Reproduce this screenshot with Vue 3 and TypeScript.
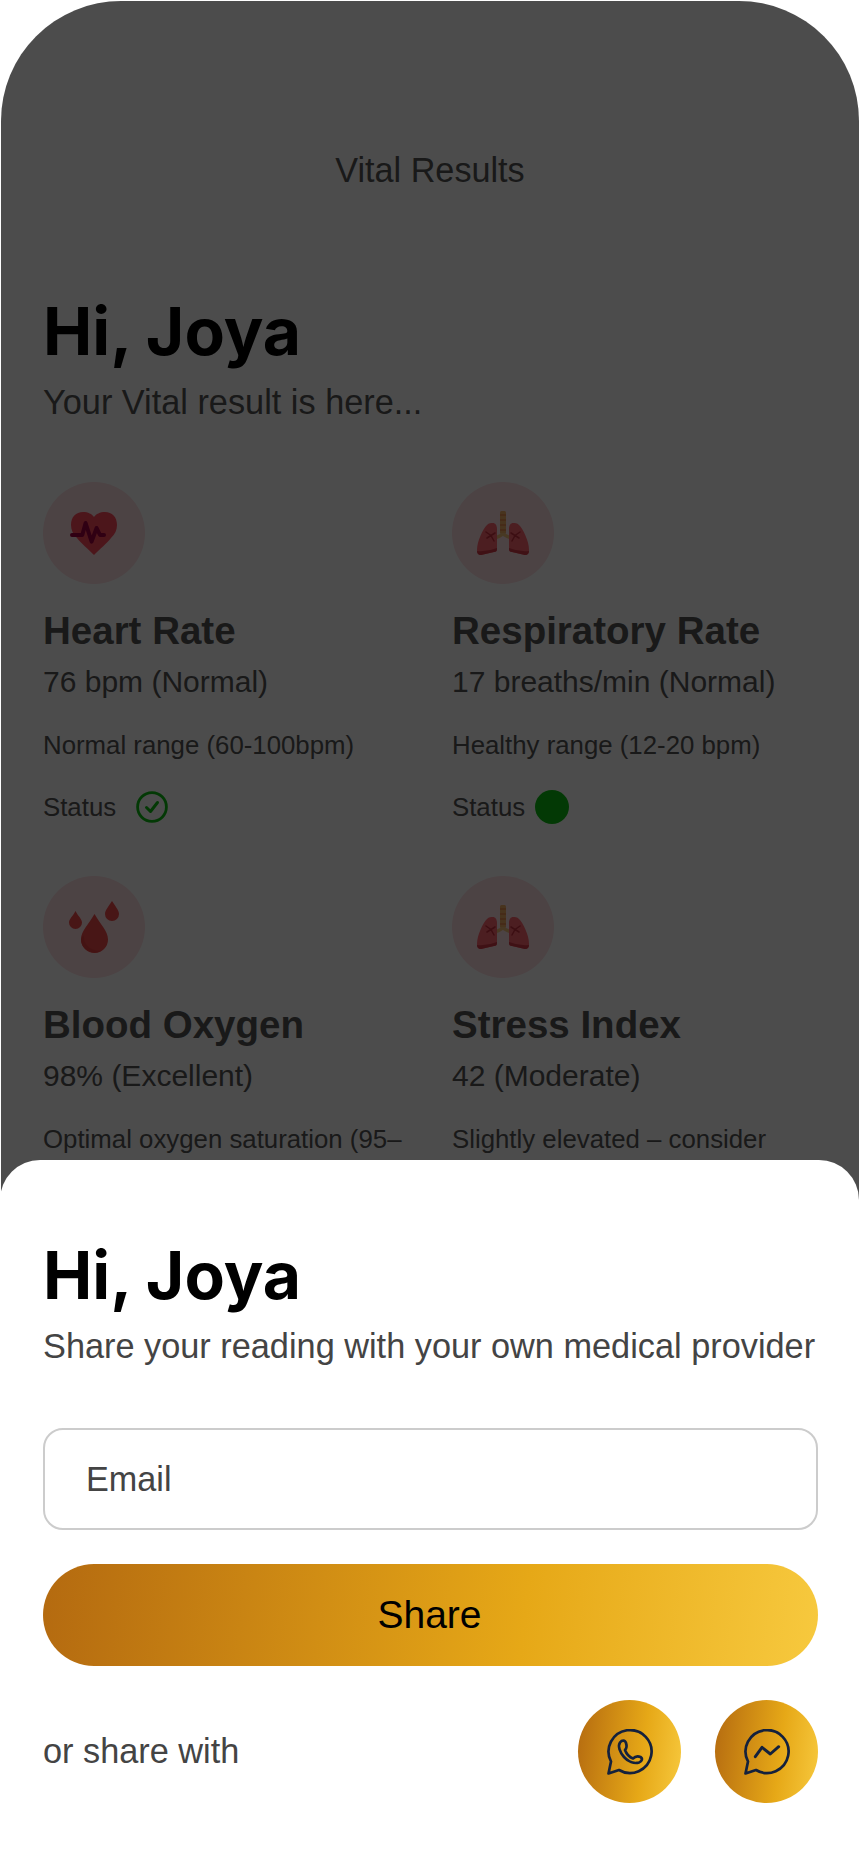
<script setup lang="ts">
interface Vital {
  name: string
  value: string
  note: string
  icon: 'heart' | 'lungs' | 'drops'
  status: 'check' | 'dot' | 'none'
}
const vitals: Vital[] = [
  { name: 'Heart Rate', value: '76 bpm (Normal)', note: 'Normal range (60-100bpm)', icon: 'heart', status: 'check' },
  { name: 'Respiratory Rate', value: '17 breaths/min (Normal)', note: 'Healthy range (12-20 bpm)', icon: 'lungs', status: 'dot' },
  { name: 'Blood Oxygen', value: '98% (Excellent)', note: 'Optimal oxygen saturation (95–100%)', icon: 'drops', status: 'check' },
  { name: 'Stress Index', value: '42 (Moderate)', note: 'Slightly elevated – consider relaxation', icon: 'lungs', status: 'dot' }
]
</script>

<template>
  <div class="page">
    <main class="screen">
      <h2 class="top-title">Vital Results</h2>
      <h1 class="hello">Hi, Joya</h1>
      <p class="lead">Your Vital result is here...</p>
      <section class="grid">
        <article v-for="v in vitals" :key="v.name" class="vital">
          <div class="badge">
            <svg v-if="v.icon === 'heart'" class="heart" viewBox="0 0 48 44">
              <path d="M24 44 C18 38 11 32 7 27 C3 23 1 19 1 14 C1 6 6 1 13 1 C18 1 22 3 24 6 C26 3 30 1 35 1 C42 1 47 6 47 14 C47 19 45 23 41 27 C37 32 30 38 24 44Z" fill="#ff4a5c"/>
              <path d="M2 24 H12.3 L15.6 12 L21.6 30.6 L26.6 17 L30 24 H34" fill="none" stroke="#a00040" stroke-width="4" stroke-linecap="round" stroke-linejoin="round"/>
            </svg>
            <svg v-else-if="v.icon === 'lungs'" class="lungs" viewBox="0 0 52 44">
              <rect x="23" y="0" width="6" height="23" rx="1.5" fill="#f2ad66"/>
              <path d="M23 4h6M23 9h6M23 14h6M23 19h6" stroke="#e8874a" stroke-width="1.6"/>
              <path d="M18 27 Q26 24 26 22 Q26 24 34 27" fill="none" stroke="#f2c078" stroke-width="3.4"/>
              <path d="M16 12 C18 12 20 14 20 18 V38 C20 40 19 41 17 41 L4 44 C1 44 0 42 0 39 C0 30 6 18 10 14 C12 12 14 12 16 12Z" fill="#ff6470"/>
              <path d="M36 12 C34 12 32 14 32 18 V38 C32 40 33 41 35 41 L48 44 C51 44 52 42 52 39 C52 30 46 18 42 14 C40 12 38 12 36 12Z" fill="#ff6470"/>
              <path d="M0 40 Q10 41 20 37 V38 C20 40 19 41 17 41 L4 44 C1 44 0 42 0 40Z M52 40 Q42 41 32 37 V38 C32 40 33 41 35 41 L48 44 C51 44 52 42 52 40Z" fill="#d43a48"/>
              <path d="M18 22 L10 27 M14 24.5 L17 30 M14 24.5 L9 21 M34 22 L42 27 M38 24.5 L35 30 M38 24.5 L43 21" stroke="#c8303e" stroke-width="1.5" fill="none" stroke-linecap="round"/>
            </svg>
            <svg v-else class="drops" viewBox="0 0 50 52">
              <path d="M25.5 13 C20 23 12 30 12 38.5 A13.5 13.5 0 0 0 39 38.5 C39 30 31 23 25.5 13Z" fill="#f04a4a"/>
              <path d="M6.5 10 C4 15 0 18 0 21.5 A6.5 6.5 0 0 0 13 21.5 C13 18 9 15 6.5 10Z" fill="#f04a4a"/>
              <path d="M43 0 C40 5 36 9 36 13 A7 7 0 0 0 50 13 C50 9 46 5 43 0Z" fill="#f04a4a"/>
              <path d="M15 34 C14 42 20 50 32 50 A13.5 13.5 0 0 1 12 38.5 C12 37 13 35.5 15 34Z" fill="#e44242"/>
            </svg>
          </div>
          <h3 class="vital-name">{{ v.name }}</h3>
          <p class="vital-value">{{ v.value }}</p>
          <p class="vital-note">{{ v.note }}</p>
          <div class="status">
            <span>Status</span>
            <svg v-if="v.status === 'check'" class="check" viewBox="0 0 32 32">
              <circle cx="16" cy="16" r="14.4" fill="none" stroke="#0cc012" stroke-width="2.8"/>
              <path d="M10.5 16.5 L14.5 20.5 L21.5 11.5" fill="none" stroke="#0cc012" stroke-width="3" stroke-linecap="round" stroke-linejoin="round"/>
            </svg>
            <i v-else class="dot"></i>
          </div>
        </article>
      </section>
      <div class="scrim"></div>
    </main>

    <section class="sheet">
      <h1 class="hello">Hi, Joya</h1>
      <p class="lead sheet-lead">Share your reading with your own medical provider</p>
      <label class="field"><span>Email</span></label>
      <button class="share" type="button">Share</button>
      <div class="socials">
        <span class="or">or share with</span>
        <div class="social-buttons">
          <button class="round" type="button" aria-label="WhatsApp">
            <svg viewBox="0 0 46 46" class="social">
              <path d="M4 32.5 L1.5 44.5 L12 41 A21.5 21.5 0 1 0 4 32.5Z" fill="none" stroke="#14213d" stroke-width="2.7" stroke-linejoin="round"/>
              <path d="M13 13.5 C15 11 18 11 19 14 C20 17 20 19 18 21 C19.5 25 23 28.5 26 29.5 C28 27.5 31 27 33.5 28 C36 29.5 35 32.5 32 33.5 C27 35 21 32.5 17 28 C13 23.5 10.5 17 13 13.5Z" fill="none" stroke="#14213d" stroke-width="2.7" stroke-linejoin="round"/>
            </svg>
          </button>
          <button class="round" type="button" aria-label="Messenger">
            <svg viewBox="0 0 46 46" class="social">
              <path d="M4 32.5 L1.5 44.5 L12 41 A21.5 21.5 0 1 0 4 32.5Z" fill="none" stroke="#14213d" stroke-width="2.7" stroke-linejoin="round"/>
              <path d="M11.3 27.7 L18 18.3 L26.3 25 L34.7 17.7" fill="none" stroke="#14213d" stroke-width="2.9" stroke-linecap="round" stroke-linejoin="round"/>
            </svg>
          </button>
        </div>
      </div>
    </section>
  </div>
</template>

<style>
html, body { margin: 0; background: #fff; }
</style>

<style scoped>
.page {
  position: relative;
  width: 859px;
  height: 1852px;
  overflow: hidden;
  background: #fff;
  font-family: "Liberation Sans", Arial, sans-serif;
}
.screen {
  position: relative;
  box-sizing: border-box;
  height: 1851px;
  margin: 1px 0 0 1px;
  padding: 0 42px;
  border-radius: 120px 120px 0 0;
  overflow: hidden;
  background: #fff;
  color: #555;
}
.scrim {
  position: absolute;
  inset: 0;
  background: rgba(0, 0, 0, 0.7);
}
.top-title {
  margin: 0;
  padding-top: 150px;
  font-size: 34.2px;
  line-height: 38px;
  font-weight: 400;
  text-align: center;
}
.hello {
  margin: 0;
  font-family: Inter, "Liberation Sans", sans-serif;
  font-size: 66px;
  line-height: 80px;
  font-weight: 700;
  color: #000;
}
.screen .hello { margin-top: 102px; }
.lead {
  margin: 11px 0 0;
  font-size: 34.3px;
  line-height: 40px;
  color: #555;
}
.grid {
  display: grid;
  grid-template-columns: 364px 364px;
  column-gap: 45px;
  row-gap: 44px;
  margin-top: 60px;
}
.vital { height: 350px; }
.badge {
  display: flex;
  align-items: center;
  justify-content: center;
  width: 102px;
  height: 102px;
  border-radius: 50%;
  background: #ffdfe3;
}
.heart { width: 48px; height: 44px; }
.lungs { width: 52px; height: 44px; }
.drops { width: 50px; height: 52px; }
.vital-name {
  margin: 25px 0 0;
  font-size: 38.5px;
  line-height: 44px;
  font-weight: 700;
}
.vital-value {
  margin: 11px 0 0;
  font-size: 30px;
  line-height: 36px;
}
.vital-note {
  margin: 29px 0 0;
  font-size: 25.8px;
  line-height: 32px;
}
.status {
  display: flex;
  align-items: center;
  gap: 20px;
  margin-top: 28px;
  font-size: 25.8px;
  height: 36px;
}
.check { width: 32px; height: 32px; }
.dot {
  display: block;
  width: 34px;
  height: 34px;
  margin-left: -10px;
  border-radius: 50%;
  background: #0cc012;
}
.sheet {
  position: absolute;
  left: 0;
  right: 0;
  bottom: 0;
  box-sizing: border-box;
  height: 692px;
  padding: 75px 41px 0 43px;
  border-radius: 40px 40px 0 0;
  background: #fff;
}
.sheet-lead { color: #444; }
.field {
  display: flex;
  align-items: center;
  box-sizing: border-box;
  height: 102px;
  margin-top: 62px;
  padding-left: 41px;
  border: 2px solid #ccc;
  border-radius: 20px;
  font-size: 34.2px;
  color: #444;
}
.share {
  display: block;
  width: 100%;
  height: 102px;
  margin-top: 34px;
  padding: 0 2px 0 0;
  border: 0;
  border-radius: 51px;
  background: linear-gradient(97deg, #b46a10 0%, #e6a817 62%, #f7c93e 100%);
  font-family: inherit;
  font-size: 39px;
  color: #000;
}
.socials {
  display: flex;
  align-items: center;
  justify-content: space-between;
  margin-top: 34px;
}
.or { font-size: 34.3px; color: #444; }
.social-buttons { display: flex; gap: 34px; }
.round {
  display: flex;
  align-items: center;
  justify-content: center;
  width: 103px;
  height: 103px;
  padding: 0;
  border: 0;
  border-radius: 50%;
  background: linear-gradient(97deg, #b46a10 0%, #e6a817 62%, #f7c93e 100%);
}
.social { width: 46px; height: 46px; }
</style>
